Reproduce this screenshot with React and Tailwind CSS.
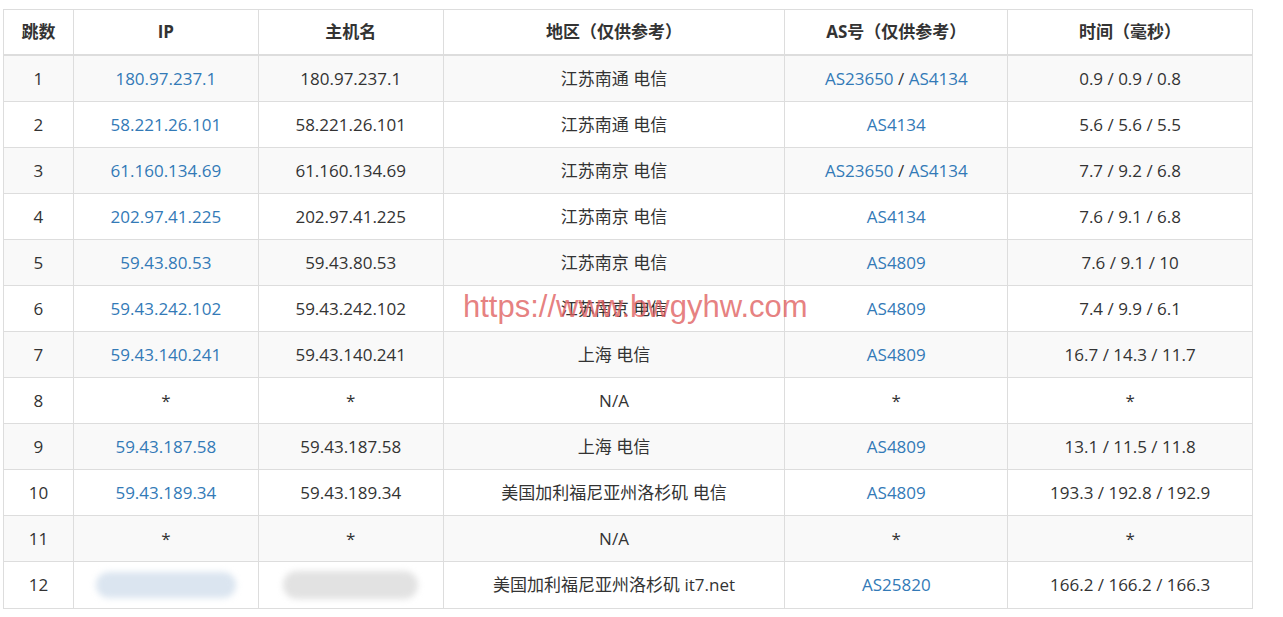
export default function App() {
  const rows = [
    ["1","180.97.237.1","180.97.237.1","江苏南通 电信",["AS23650","AS4134"],"0.9 / 0.9 / 0.8"],
    ["2","58.221.26.101","58.221.26.101","江苏南通 电信",["AS4134"],"5.6 / 5.6 / 5.5"],
    ["3","61.160.134.69","61.160.134.69","江苏南京 电信",["AS23650","AS4134"],"7.7 / 9.2 / 6.8"],
    ["4","202.97.41.225","202.97.41.225","江苏南京 电信",["AS4134"],"7.6 / 9.1 / 6.8"],
    ["5","59.43.80.53","59.43.80.53","江苏南京 电信",["AS4809"],"7.6 / 9.1 / 10"],
    ["6","59.43.242.102","59.43.242.102","江苏南京 电信",["AS4809"],"7.4 / 9.9 / 6.1"],
    ["7","59.43.140.241","59.43.140.241","上海 电信",["AS4809"],"16.7 / 14.3 / 11.7"],
    ["8","*","*","N/A",null,"*"],
    ["9","59.43.187.58","59.43.187.58","上海 电信",["AS4809"],"13.1 / 11.5 / 11.8"],
    ["10","59.43.189.34","59.43.189.34","美国加利福尼亚州洛杉矶 电信",["AS4809"],"193.3 / 192.8 / 192.9"],
    ["11","*","*","N/A",null,"*"],
    ["12","BLUR","BLUR","美国加利福尼亚州洛杉矶 it7.net",["AS25820"],"166.2 / 166.2 / 166.3"],
  ];
  const widths = ["w-[70px]","w-[185px]","w-[185px]","w-[342px]","w-[223px]","w-[244px]"];
  const cell = "border-r border-[#dddddd] last:border-r-0 flex items-center justify-center h-full";
  return (
    <div className="relative bg-white w-[1283px] h-[617px] pt-[9px] pl-[3px]" style={{fontFamily:'"Open Sans","Noto Sans CJK SC",sans-serif'}}>
      <div className="w-[1250px] border border-[#dddddd] text-[17px] text-[#333]">
        <div className="flex h-[46px] border-b-2 border-[#dddddd] font-bold">
          {["跳数","IP","主机名","地区（仅供参考）","AS号（仅供参考）","时间（毫秒）"].map((h,i)=>(
            <div key={i} className={`${widths[i]} ${cell}`}>{h}</div>
          ))}
        </div>
        {rows.map((r,idx)=>(
          <div key={idx} className={`flex h-[46px] ${idx<11?"border-b border-[#dddddd]":""} ${idx%2===0?"bg-[#f9f9f9]":"bg-white"}`}>
            <div className={`${widths[0]} ${cell}`}>{r[0]}</div>
            <div className={`${widths[1]} ${cell} text-[#337ab7]`}>
              {r[1]==="BLUR"?<div className="w-[140px] h-[26px] bg-[#dbe5f0] blur-[3px] rounded-full" />:r[1]==="*"?<span className="text-[#333]">*</span>:r[1]}
            </div>
            <div className={`${widths[2]} ${cell}`}>
              {r[2]==="BLUR"?<div className="w-[135px] h-[28px] bg-[#e2e2e2] blur-[3px] rounded-full" />:r[2]}
            </div>
            <div className={`${widths[3]} ${cell}`}>{r[3]}</div>
            <div className={`${widths[4]} ${cell}`}>
              {r[4]?r[4].map((a,j)=>(<span key={j}>{j>0&&<span className="text-[#333]">&nbsp;/&nbsp;</span>}<span className="text-[#337ab7]">{a}</span></span>)):"*"}
            </div>
            <div className={`${widths[5]} ${cell}`}>{r[5]}</div>
          </div>
        ))}
      </div>
      <div className="absolute left-[463px] top-[284px] text-[31px] text-[#e06060]/80" style={{fontFamily:'"Liberation Sans",sans-serif'}}>https://www.bwgyhw.com</div>
    </div>
  );
}
